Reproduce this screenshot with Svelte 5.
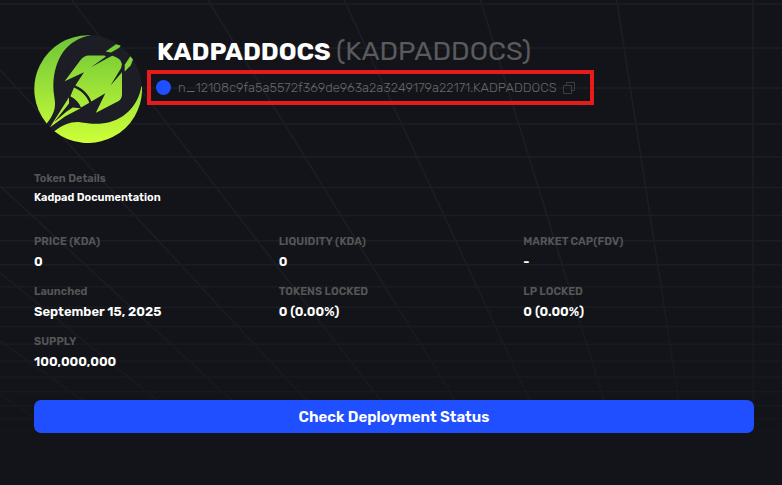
<script>
  const address = 'n_12108c9fa5a5572f369de963a2a3249179a22171.KADPADDOCS';

  const stats = [
    { label: 'PRICE (KDA)', value: '0' },
    { label: 'LIQUIDITY (KDA)', value: '0' },
    { label: 'MARKET CAP(FDV)', value: '-' },
    { label: 'Launched', value: 'September 15, 2025' },
    { label: 'TOKENS LOCKED', value: '0 (0.00%)' },
    { label: 'LP LOCKED', value: '0 (0.00%)' },
    { label: 'SUPPLY', value: '100,000,000' }
  ];

  // Perspective floor: rows get closer together towards the horizon
  const rows = [4, 48, 88, 124, 157, 187.5, 215.5, 240.8, 264.7, 286.7, 307.2, 326.5, 344.3, 361.2, 377, 391.8, 405.7, 418.7, 431, 442.5, 453.5, 464, 474];
  const rays = [-4, -3, -2, -1, 0, 1, 2, 3, 4, 5, 6, 7, 8, 9, 10, 11, 12];

  function copyAddress() {
    navigator.clipboard?.writeText(address);
  }
</script>

<main class="page">
  <svg class="floor" aria-hidden="true">
    <defs>
      <linearGradient id="fade" gradientUnits="userSpaceOnUse" x1="0" y1="0" x2="0" y2="485">
        <stop offset="0" stop-color="#1d1e23" />
        <stop offset="0.5" stop-color="#1c1d22" />
        <stop offset="0.85" stop-color="#17181d" />
        <stop offset="0.92" stop-color="#131419" />
        <stop offset="1" stop-color="#131419" />
      </linearGradient>
    </defs>
    <g stroke="url(#fade)" stroke-width="1.5" fill="none">
      {#each rows as y}
        <path d="M-10 {y}L3000 {y + 0.01}" />
      {/each}
      {#each rays as k}
        <path d="M{753 - 136.3 * k} 0L{753.1 - 61.4 * k} 485" />
      {/each}
    </g>
  </svg>

  <header class="token">
    <svg class="logo" viewBox="27 29.5 324 324" role="img" aria-label="KADPADDOCS logo">
      <defs>
        <linearGradient id="lime" gradientUnits="userSpaceOnUse" x1="0" y1="30" x2="0" y2="353">
          <stop offset="0" stop-color="#6cc537" />
          <stop offset="1" stop-color="#cdff38" />
        </linearGradient>
      </defs>
      <circle cx="189" cy="191.500" r="162" fill="#1c1d25" />
      <g fill="url(#lime)">
        <path d="M196 30A162 162 0 0 0 65 295C83 273 91 254 90 232C89 216 85 203 85 184C86 96 130 42 196 31Z" />
        <path d="M351 184A162 162 0 0 1 88 318C116 298 138 289 165 291C184 294 207 297 230 295C294 289 339 244 349 184Z" />
        <path d="M119 168L166 105Q178 91 190 91L238 91L243 94L198 126L251 97L262 92Q288 99 291 117L288 129L256 182L291 141V209Q290 224 278 229L213 263L214 260L241 204L199 229C192 208 173 190 151 181L177 141Z" />
        <path d="M242 79L273 57L287 61L283 68L258 82Z" />
        <path d="M299 139V119L316 93L324 103L317 121Z" />
        <path d="M147 187C168 196 186 212 193 233L168 247C163 233 152 221 136 213Z" />
        <path d="M132 216L132 235L87 291L124 260L143 247L167 249L121 273L75 306Z" />
      </g>
    </svg>

    <div class="identity">
      <h1>KADPADDOCS <span>(KADPADDOCS)</span></h1>
      <div class="address">
        <span class="dot"></span>
        <span class="hash">{address}</span>
        <button class="copy" type="button" aria-label="Copy address" onclick={copyAddress}>
          <svg viewBox="0 0 12 12" fill="none" stroke="#3c3d42" stroke-width="1">
            <path d="M.5 3.500H8.500V11.500H.5ZM3.500 3.500V.5H11.500V8.500H8.500" />
          </svg>
        </button>
      </div>
    </div>
  </header>

  <section class="details">
    <h2>Token Details</h2>
    <p>Kadpad Documentation</p>
  </section>

  <dl class="stats">
    {#each stats as stat}
      <div>
        <dt>{stat.label}</dt>
        <dd>{stat.value}</dd>
      </div>
    {/each}
  </dl>

  <button class="status" type="button">Check Deployment Status</button>
</main>

<style>
  :global(body) {
    margin: 0;
    background: #131419;
  }

  .page {
    position: relative;
    box-sizing: border-box;
    min-height: 100vh;
    padding: 35px 28px 52px 34px;
    overflow: hidden;
    background: #131419;
    color: #fff;
    font-family: Rubik, Inter, sans-serif;
    display: flex;
    flex-direction: column;
  }

  .floor {
    position: absolute;
    inset: 0;
    width: 100%;
    height: 100%;
  }

  .token,
  .details,
  .stats,
  .status {
    position: relative;
  }

  .token {
    display: flex;
    gap: 5px;
    height: 108px;
  }

  .logo {
    flex: none;
    width: 108px;
    height: 108px;
  }

  h1 {
    margin: 0 0 2px 10px;
    font-size: 25px;
    line-height: 32px;
    font-weight: 700;
    white-space: nowrap;
  }

  h1 span {
    color: #5a5a5c;
    font-size: 27px;
    font-weight: 400;
  }

  .address {
    box-sizing: border-box;
    display: inline-flex;
    align-items: center;
    height: 35px;
    padding: 0 15px 0 5px;
    border: 4px solid #e71b1b;
    white-space: nowrap;
  }

  .dot {
    width: 15px;
    height: 15px;
    margin-right: 7px;
    border-radius: 50%;
    background: #1f4fff;
  }

  .hash {
    color: #66676a;
    font-size: 13px;
    line-height: 16px;
    font-weight: 300;
  }

  .copy {
    display: flex;
    margin-left: 6px;
    padding: 0;
    border: 0;
    background: none;
    cursor: pointer;
  }

  .copy svg {
    width: 12px;
    height: 12px;
  }

  .details {
    margin-top: 28px;
  }

  h2,
  dt {
    margin: 0;
    color: #555658;
    font-size: 11px;
    line-height: 16px;
    font-weight: 600;
  }

  .details p {
    margin: 3px 0 0;
    font-size: 11px;
    line-height: 16px;
    font-weight: 600;
  }

  .stats {
    display: grid;
    grid-template-columns: repeat(3, 1fr);
    gap: 12px 14px;
    margin: 28px 0 0;
  }

  dd {
    margin: 2px 0 0;
    font-size: 13px;
    line-height: 20px;
    font-weight: 600;
  }

  .status {
    height: 33px;
    margin-top: 28px;
    padding: 0;
    border: 0;
    border-radius: 7px;
    background: #1f4fff;
    color: #fff;
    font: inherit;
    font-size: 15px;
    font-weight: 600;
    cursor: pointer;
  }
</style>
